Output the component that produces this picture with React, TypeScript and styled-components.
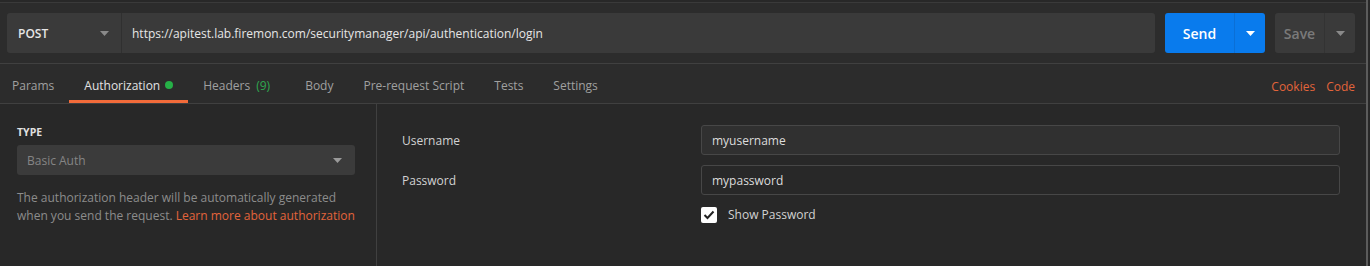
import React from 'react';
import styled, { createGlobalStyle } from 'styled-components';

const GlobalStyle = createGlobalStyle`
  body {
    margin: 0;
    background: #282828;
    font-family: 'Open Sans', 'Noto Sans', sans-serif;
  }
`;

const tabs = [
  { name: 'Params', first: true },
  { name: 'Authorization', dot: true, active: true },
  { name: 'Headers', count: '(9)' },
  { name: 'Body' },
  { name: 'Pre-request Script' },
  { name: 'Tests' },
  { name: 'Settings' },
];

const Caret = ({ color }: { color: string }) => (
  <svg width="9" height="5" viewBox="0 0 9 5">
    <path d="M0 0 L9 0 L4.5 5 Z" fill={color} />
  </svg>
);

const App: React.FC = () => {
  return (
    <Page>
      <GlobalStyle />
      <TopBar>
        <RequestBox>
          <Method>
            <span>POST</span>
            <Caret color="#8a8a8a" />
          </Method>
          <Url>https://apitest.lab.firemon.com/securitymanager/api/authentication/login</Url>
        </RequestBox>
        <SplitButton $primary>
          <MainPart $primary>Send</MainPart>
          <ArrowPart>
            <Caret color="#ffffff" />
          </ArrowPart>
        </SplitButton>
        <SplitButton $width={80}>
          <MainPart>Save</MainPart>
          <ArrowPart>
            <Caret color="#8a8a8a" />
          </ArrowPart>
        </SplitButton>
      </TopBar>

      <TabBar>
        <Tabs>
          {tabs.map((t) => (
            <Tab key={t.name} $active={t.active} $first={t.first}>
              {t.name}
              {t.count && <Count>{t.count}</Count>}
              {t.dot && <Dot />}
            </Tab>
          ))}
        </Tabs>
        <Links>
          <LinkText>Cookies</LinkText>
          <LinkText>Code</LinkText>
        </Links>
      </TabBar>

      <Content>
        <LeftPanel>
          <TypeLabel>TYPE</TypeLabel>
          <TypeSelect>
            <span>Basic Auth</span>
            <Caret color="#9a9a9a" />
          </TypeSelect>
          <Help>
            The authorization header will be automatically generated when you send the request.{' '}
            <LinkText>Learn more about authorization</LinkText>
          </Help>
        </LeftPanel>
        <RightPanel>
          <FieldRow>
            <FieldLabel>Username</FieldLabel>
            <Input $filled>myusername</Input>
          </FieldRow>
          <FieldRow>
            <FieldLabel>Password</FieldLabel>
            <Input>mypassword</Input>
          </FieldRow>
          <CheckRow>
            <CheckBox>
              <svg width="12" height="10" viewBox="0 0 12 10">
                <path d="M1.5 5 L4.5 8 L10.5 1.5" stroke="#222" strokeWidth="2" fill="none" />
              </svg>
            </CheckBox>
            <span>Show Password</span>
          </CheckRow>
        </RightPanel>
      </Content>
    </Page>
  );
};

export default App;

const Page = styled.div`
  width: 1366px;
  height: 266px;
  border-right: 2px solid #5c5c5c;
  background: #282828;
  display: flex;
  flex-direction: column;
  overflow: hidden;
`;

const TopBar = styled.div`
  height: 62px;
  margin-top: 2px;
  border-top: 1px solid #3a3a3a;
  border-bottom: 1px solid #404040;
  background: #2c2c2c;
  display: flex;
  align-items: center;
  padding: 0 11px 0 7px;
  gap: 10px;
  box-sizing: border-box;
`;

const RequestBox = styled.div`
  flex: 1;
  height: 40px;
  display: flex;
  background: #3a3a3a;
  border-radius: 3px;
`;

const Method = styled.div`
  width: 115px;
  box-sizing: border-box;
  padding: 0 12px 0 11px;
  display: flex;
  align-items: center;
  justify-content: space-between;
  border-right: 1px solid #303030;
  font-size: 12px;
  font-weight: 600;
  color: #e6e6e6;
`;

const Url = styled.div`
  flex: 1;
  display: flex;
  align-items: center;
  padding-left: 10px;
  font-size: 12px;
  color: #e6e6e6;
`;

const SplitButton = styled.div<{ $primary?: boolean; $width?: number }>`
  width: ${(p) => p.$width ?? 100}px;
  height: 40px;
  display: flex;
  border-radius: 3px;
  background: ${(p) => (p.$primary ? '#097bed' : '#3a3a3a')};
`;

const MainPart = styled.div<{ $primary?: boolean }>`
  flex: 1;
  display: flex;
  align-items: center;
  justify-content: center;
  font-size: 14px;
  font-weight: 600;
  color: ${(p) => (p.$primary ? '#ffffff' : '#7a7a7a')};
  border-right: 1px solid ${(p) => (p.$primary ? '#0a6fd6' : '#333333')};
`;

const ArrowPart = styled.div`
  width: 30px;
  display: flex;
  align-items: center;
  justify-content: center;
`;

const TabBar = styled.div`
  height: 40px;
  background: #2c2c2c;
  border-bottom: 1px solid #404040;
  display: flex;
  justify-content: space-between;
  padding: 0 11px 0 0;
  box-sizing: border-box;
`;

const Tabs = styled.div`
  display: flex;
  height: 100%;
`;

const Tab = styled.div<{ $active?: boolean; $first?: boolean }>`
  display: flex;
  align-items: center;
  padding: 4px 15px 0 ${(p) => (p.$first ? 12 : 15)}px;
  font-size: 12px;
  color: ${(p) => (p.$active ? '#e2e2e2' : '#a0a0a0')};
  box-shadow: ${(p) => (p.$active ? 'inset 0 -3px 0 #f26b3a' : 'none')};
`;

const Count = styled.span`
  color: #2fa84f;
  margin: 0 5px 0 6px;
`;

const Dot = styled.span`
  width: 8px;
  height: 8px;
  border-radius: 50%;
  background: #26b047;
  margin: -2px 0 0 5px;
`;

const Links = styled.div`
  display: flex;
  align-items: center;
  gap: 11px;
  font-size: 12px;
  padding-top: 5px;
`;

const LinkText = styled.span`
  color: #e3643b;
`;

const Content = styled.div`
  flex: 1;
  display: flex;
`;

const LeftPanel = styled.div`
  width: 377px;
  box-sizing: border-box;
  border-right: 1px solid #404040;
  padding: 21px 21px 0 17px;
`;

const TypeLabel = styled.div`
  font-size: 10.5px;
  font-weight: 700;
  color: #e0e0e0;
  line-height: 14px;
  margin-bottom: 6px;
`;

const TypeSelect = styled.div`
  height: 30px;
  background: #3b3b3b;
  border-radius: 3px;
  display: flex;
  align-items: center;
  justify-content: space-between;
  padding: 0 13px 0 10px;
  font-size: 12px;
  color: #858585;
`;

const Help = styled.div`
  margin-top: 14px;
  font-size: 12px;
  line-height: 18px;
  color: #8c8c8c;
`;

const RightPanel = styled.div`
  flex: 1;
  padding: 21px 26px 0 25px;
  display: flex;
  flex-direction: column;
  gap: 10px;
`;

const FieldRow = styled.div`
  display: flex;
  align-items: center;
`;

const FieldLabel = styled.div`
  width: 299px;
  font-size: 12px;
  color: #d2d2d2;
`;

const Input = styled.div<{ $filled?: boolean }>`
  flex: 1;
  height: 30px;
  box-sizing: border-box;
  border: 1px solid #474747;
  border-radius: 3px;
  background: ${(p) => (p.$filled ? '#303030' : '#282828')};
  display: flex;
  align-items: center;
  padding-left: 10px;
  font-size: 12px;
  color: #dcdcdc;
`;

const CheckRow = styled.div`
  display: flex;
  align-items: center;
  gap: 11px;
  margin-left: 299px;
  margin-top: 1px;
  font-size: 12px;
  color: #d2d2d2;
`;

const CheckBox = styled.div`
  width: 16px;
  height: 16px;
  border-radius: 2px;
  background: #ffffff;
  display: flex;
  align-items: center;
  justify-content: center;
`;
